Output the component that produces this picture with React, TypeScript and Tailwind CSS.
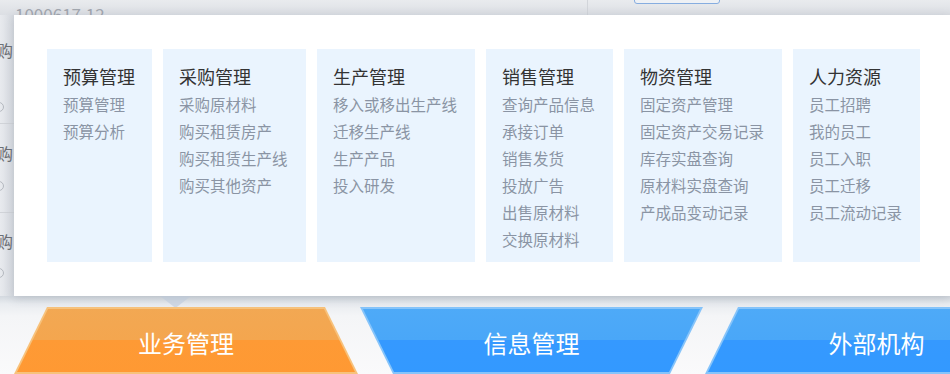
import React from "react";

const groups = [
  { title: "预算管理", w: "w-[105px]", items: ["预算管理", "预算分析"] },
  { title: "采购管理", w: "w-[143px]", items: ["采购原材料", "购买租赁房产", "购买租赁生产线", "购买其他资产"] },
  { title: "生产管理", w: "w-[158px]", items: ["移入或移出生产线", "迁移生产线", "生产产品", "投入研发"] },
  { title: "销售管理", w: "w-[127px]", items: ["查询产品信息", "承接订单", "销售发货", "投放广告", "出售原材料", "交换原材料"] },
  { title: "物资管理", w: "w-[158px]", items: ["固定资产管理", "固定资产交易记录", "库存实盘查询", "原材料实盘查询", "产成品变动记录"] },
  { title: "人力资源", w: "w-[127px]", items: ["员工招聘", "我的员工", "员工入职", "员工迁移", "员工流动记录"] },
];

function MenuCard({ group }) {
  return (
    <div className={`${group.w} shrink-0 bg-[#eaf4fe] pl-[16px] pt-[13px] pb-[9px]`}>
      <div className="text-[18px] leading-[28px] text-[#333333] whitespace-nowrap">{group.title}</div>
      <div className="mt-[1px] flex flex-col">
        {group.items.map((it) => (
          <div key={it} className="text-[15.5px] leading-[27px] text-[#8a94a4] whitespace-nowrap cursor-pointer hover:text-[#3399ff]">
            {it}
          </div>
        ))}
      </div>
    </div>
  );
}

function OrangeTab({ label }) {
  return (
    <div className="relative w-[344px] h-[67px] shrink-0 bg-[#f7c27c] [clip-path:polygon(33px_0,311px_0,344px_100%,0_100%)]">
      <div className="absolute inset-0 bg-[linear-gradient(to_bottom,#f2a853_0%,#f4a64f_49%,#fe9a35_50%,#ff9933_100%)] [clip-path:polygon(34px_2px,310px_2px,341px_65px,3px_65px)]" />
      <div className="relative h-full flex items-center justify-center pt-[5px] text-[24px] text-white">{label}</div>
    </div>
  );
}

function BlueTab({ label, flip }) {
  return (
    <div
      className={`relative w-[343px] h-[67px] shrink-0 bg-[#86c4fa] ${
        flip
          ? "[clip-path:polygon(33px_0,343px_0,310px_100%,0_100%)]"
          : "[clip-path:polygon(0_0,343px_0,310px_100%,33px_100%)]"
      }`}
    >
      <div
        className={`absolute inset-0 bg-[linear-gradient(to_bottom,#4eaaf8_0%,#4aa7f8_49%,#3599ff_50%,#3399ff_100%)] ${
          flip
            ? "[clip-path:polygon(34px_2px,343px_2px,309px_65px,3px_65px)]"
            : "[clip-path:polygon(3px_2px,340px_2px,309px_65px,34px_65px)]"
        }`}
      />
      <div className="relative h-full flex items-center justify-center pt-[5px] text-[24px] text-white">{label}</div>
    </div>
  );
}

function Circle() {
  return <div className="w-[10px] h-[10px] -ml-[6px] rounded-full border border-[#b4b8bf]" />;
}

export default function App() {
  return (
    <div className="relative w-[950px] h-[374px] overflow-hidden bg-[#f5f6f8] font-['Noto_Sans_CJK_SC','Noto_Sans',sans-serif]">
      {/* page behind the popup, top edge */}
      <div className="relative h-[15px] overflow-hidden bg-[linear-gradient(to_bottom,#e9ebee,#dcdfe4)] flex">
        <div className="w-[588px] shrink-0 border-r border-[#d2d5da] pl-[15px] pt-[2px]">
          <span className="text-[17px] leading-[20px] text-[#a3a8b0]">1000617.12</span>
        </div>
        <div className="ml-[46px] w-[86px] h-[5px] -mt-[1px] rounded-b-[3px] border border-[#86ade0] bg-[#eef1f5]" />
      </div>

      <div className="flex h-[281px]">
        {/* page behind the popup, left edge */}
        <div className="w-[14px] shrink-0 overflow-hidden bg-[linear-gradient(to_right,#e8eaee,#d6dae0)] flex flex-col">
          <div className="mt-[26px] -ml-[3px] text-[16px] leading-[18px] text-[#6c6f75]">购</div>
          <div className="mt-[43px]"><Circle /></div>
          <div className="mt-[11px] h-px bg-[#d0d3d8]" />
          <div className="mt-[20px] -ml-[3px] text-[16px] leading-[18px] text-[#6c6f75]">购</div>
          <div className="mt-[19px]"><Circle /></div>
          <div className="mt-[21px] h-px bg-[#d0d3d8]" />
          <div className="mt-[19px] -ml-[3px] text-[16px] leading-[18px] text-[#6c6f75]">购</div>
          <div className="mt-[18px]"><Circle /></div>
        </div>

        {/* popup menu */}
        <div className="relative z-10 flex-1 bg-white pl-[33px] pt-[34px] pb-[34px] flex gap-[11px] items-stretch shadow-[0_2px_10px_rgba(60,70,90,0.18)]">
          {groups.map((g) => (
            <MenuCard key={g.title} group={g} />
          ))}
        </div>
      </div>

      {/* tab bar */}
      <div className="relative h-[78px] bg-[linear-gradient(to_bottom,#d3d8df_0px,#e9ecf0_8px,#f4f5f7_20px,#fafafb_78px)]">
        <div className="absolute left-[160px] top-0 w-[31px] h-[12px] bg-[#d0d9e5] [clip-path:polygon(0_0,100%_0,50%_100%)]" />
        <div className="flex gap-[2px] pl-[14px] pt-[11px]">
          <OrangeTab label="业务管理" />
          <BlueTab label="信息管理" />
          <BlueTab label="外部机构" flip />
        </div>
      </div>
    </div>
  );
}
